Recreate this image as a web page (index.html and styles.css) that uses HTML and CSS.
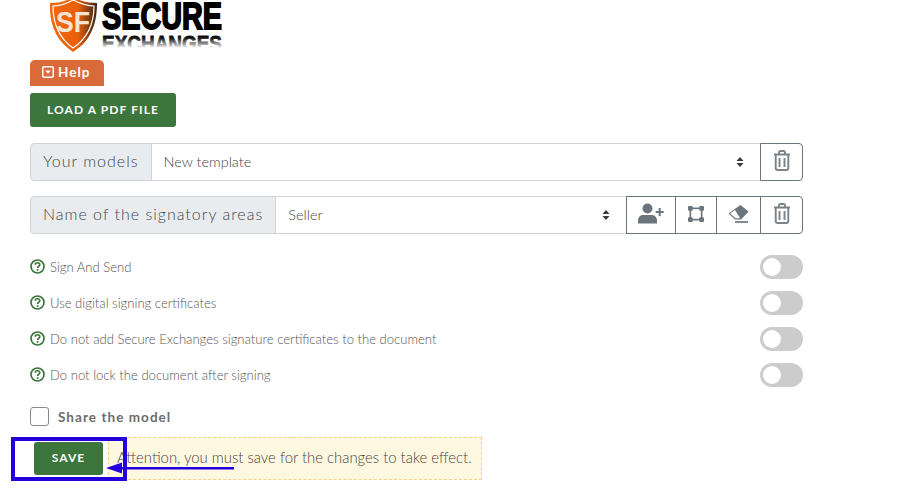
FILE: index.html
```html
<!DOCTYPE html>
<html lang="en">
<head>
<meta charset="utf-8">
<title>Signature template</title>
<link rel="stylesheet" href="styles.css">
</head>
<body>
<main class="page">
  <svg class="logo" viewBox="0 0 172 52" width="172" height="52" aria-label="Secure Exchanges">
    <defs>
      <linearGradient id="sh" x1="0" x2="1" y1="0" y2="0">
        <stop offset="0" stop-color="#f26a10"/><stop offset=".6" stop-color="#e85f08"/><stop offset="1" stop-color="#3a2318"/>
      </linearGradient>
      <linearGradient id="fade" x1="0" x2="0" y1="0" y2="1">
        <stop offset="0" stop-color="#fff" stop-opacity="0"/><stop offset=".55" stop-color="#fff" stop-opacity=".75"/><stop offset=".7" stop-color="#fff"/><stop offset="1" stop-color="#fff"/>
      </linearGradient>
    </defs>
    <path d="M23 -3 C32 2 40 3 47 3 C47 24 41 41 23 52 C6 41 -1 24 0 3 C7 3 15 2 23 -3Z" fill="url(#sh)"/>
    <path d="M23 0 C31 4 38 6 44 6 C44 24 38 38 23 48 C9 38 3 24 3 6 C9 6 16 4 23 0Z" fill="none" stroke="#fff" stroke-width="1.2"/>
    <text class="logo-sf" x="6" y="32" textLength="34" lengthAdjust="spacingAndGlyphs">SF</text>
    <text class="logo-a" x="52" y="29" textLength="120" lengthAdjust="spacingAndGlyphs">SECURE</text>
    <text class="logo-b" x="52" y="51" textLength="120" lengthAdjust="spacingAndGlyphs">EXCHANGES</text>
    <rect x="50" y="38" width="124" height="14" fill="url(#fade)"/>
  </svg>

  <button class="help" type="button">
    <svg width="12" height="12" viewBox="0 0 12 12"><rect x=".75" y=".75" width="10.5" height="10.5" rx="1.5" fill="none" stroke="#fff" stroke-width="1.5"/><path d="M3.2 4.4h5.6L6 7.8z" fill="#fff"/></svg>
    <span class="help-label">Help</span>
  </button>

  <button class="btn btn-load" type="button"><span class="btn-label">LOAD A PDF FILE</span></button>

  <div class="group group-first">
    <span class="addon">Your models</span>
    <div class="select"><span>New template</span><svg class="updown" width="8" height="12" viewBox="0 0 8 12"><path d="M4 1l3.5 4h-7zM4 11L.5 7h7z" fill="#343a40"/></svg></div>
    <button class="icon-btn" type="button" aria-label="Delete"><svg width="18" height="21" viewBox="0 0 18 21"><use href="#trash"/></svg></button>
  </div>

  <div class="group">
    <span class="addon">Name of the signatory areas</span>
    <div class="select"><span>Seller</span><svg class="updown" width="8" height="12" viewBox="0 0 8 12"><path d="M4 1l3.5 4h-7zM4 11L.5 7h7z" fill="#343a40"/></svg></div>
    <button class="icon-btn icon-user" type="button" aria-label="Add signer"><svg width="26" height="21" viewBox="0 0 26 21" fill="#6c757d"><circle cx="9.5" cy="5.5" r="5"/><path d="M0 20.500v-3c0-3.500 2.500-5.500 5.500-5.500h8c3.500 0 5.500 2.500 5.500 5.500v3z"/><path d="M20.700 5h2v3h3v2h-3v3h-2v-3h-3V8h3z"/></svg></button>
    <button class="icon-btn icon-area" type="button" aria-label="Area"><svg width="16" height="16" viewBox="0 0 17 17"><rect x="2.500" y="2.500" width="12" height="12" fill="none" stroke="#6c757d" stroke-width="1.800"/><g fill="#6c757d"><rect width="5" height="5" rx="1"/><rect x="12" width="5" height="5" rx="1"/><rect y="12" width="5" height="5" rx="1"/><rect x="12" y="12" width="5" height="5" rx="1"/></g></svg></button>
    <button class="icon-btn icon-erase" type="button" aria-label="Erase"><svg width="21" height="18" viewBox="0 0 21 18"><path d="M12.500 0L20.500 6.500 13 14.500H7L.5 8.500z" fill="#6c757d"/><path d="M7 5L2.200 8.600 7.500 13.200h4.700z" fill="#fff"/><path d="M7 17h13" stroke="#6c757d" stroke-width="1.700"/></svg></button>
    <button class="icon-btn" type="button" aria-label="Delete"><svg width="18" height="21" viewBox="0 0 18 21"><use href="#trash"/></svg></button>
  </div>

  <svg class="defs" width="0" height="0"><symbol id="trash" viewBox="0 0 18 21"><path d="M1 4.500h16M6 4V2.500C6 1.600 6.600 1 7.500 1h3c.9 0 1.500.6 1.500 1.500V4M2.700 5v13c0 1.200.8 2 2 2h8.600c1.200 0 2-.8 2-2V5M6.500 8v9M11.500 8v9" fill="none" stroke="#7b8288" stroke-width="1.900"/></symbol></svg>

  <ul class="options">
    <li class="option"><svg class="q" width="15" height="15" viewBox="0 0 15 15"><use href="#qm"/></svg><span>Sign And Send</span><i class="toggle"></i></li>
    <li class="option"><svg class="q" width="15" height="15" viewBox="0 0 15 15"><use href="#qm"/></svg><span>Use digital signing certificates</span><i class="toggle"></i></li>
    <li class="option"><svg class="q" width="15" height="15" viewBox="0 0 15 15"><use href="#qm"/></svg><span>Do not add Secure Exchanges signature certificates to the document</span><i class="toggle"></i></li>
    <li class="option"><svg class="q" width="15" height="15" viewBox="0 0 15 15"><use href="#qm"/></svg><span>Do not lock the document after signing</span><i class="toggle"></i></li>
  </ul>
  <svg class="defs" width="0" height="0"><symbol id="qm" viewBox="0 0 15 15"><circle cx="7.500" cy="7.500" r="6.500" fill="none" stroke="#3c763d" stroke-width="1.700"/><path d="M5.200 5.800c0-1.300 1-2 2.300-2s2.300.8 2.300 1.900c0 1.600-2.200 1.500-2.200 3.200" fill="none" stroke="#3c763d" stroke-width="1.600"/><circle cx="7.600" cy="11" r="1" fill="#3c763d"/></symbol></svg>

  <label class="share"><i class="check"></i>Share the model</label>

  <div class="save-row">
    <button class="btn btn-save" type="button"><span class="btn-label">SAVE</span></button>
    <div class="notice">Attention, you must save for the changes to take effect.</div>
    <i class="mark-box"></i>
    <svg class="mark-arrow" width="130" height="14" viewBox="0 0 130 14"><path d="M128 6v2.500H16V6z" fill="#2200dd"/><path d="M0 7L16 1.500v11z" fill="#2200dd"/></svg>
  </div>
</main>
</body>
</html>
```
FILE: styles.css
```css
* { box-sizing: border-box; }
html, body { margin: 0; background: #fff; }
body { font-family: Lato, "Open Sans", sans-serif; color: #6c6c6c; overflow: hidden; }
button { font-family: inherit; cursor: pointer; }
.page { width: 803px; height: 493px; margin-left: 30px; display: flex; flex-direction: column; align-items: flex-start; }

.logo { display: block; margin-left: 20px; height: 52px; overflow: hidden; flex: none; }
.logo-sf { font: 900 30px "Liberation Sans", sans-serif; fill: #f7e3d4; }
.logo-a { font: 700 37px "Liberation Sans", sans-serif; fill: #000; stroke: #000; stroke-width: 1.800px; }
.logo-b { font: 700 22px "Liberation Sans", sans-serif; fill: #111; stroke: #111; stroke-width: .8px; }

.help { margin-top: 8px; width: 74px; height: 26px; padding: 0 0 2px 12px; display: flex; align-items: center; gap: 4px; border: 0; border-radius: 5px 5px 0 0; background: #d96b3b; color: #fff; font-weight: 700; font-size: 13.500px; letter-spacing: 1px; }

.btn { border: 0; border-radius: 3px; background: #3c763d; color: #fff; font-weight: 700; font-size: 12px; letter-spacing: 1.100px; padding: 0 0 2px; }
.btn-load { margin-top: 7px; width: 146px; height: 34px; }

.group { display: flex; width: 773px; height: 38px; margin-top: 15px; flex: none; }
.group-first { margin-top: 16px; }
.addon { display: flex; align-items: center; padding: 0 12px 3px 12px; background: #e9ecef; border: 1px solid #ced4da; border-radius: 4px 0 0 4px; font-size: 16px; font-weight: 300; letter-spacing: 1px; color: #3f464d; white-space: nowrap; }
.select { flex: 1; display: flex; align-items: center; justify-content: space-between; padding: 0 16px 0 12px; margin-left: -1px; border: 1px solid #ced4da; font-size: 14.500px; font-weight: 300; color: #3f464d; }
.select span { padding-bottom: 2px; }
.icon-btn { width: 43px; display: flex; align-items: center; justify-content: center; margin-left: -1px; padding: 0 0 3px; background: #fff; border: 1px solid #6c757d; }
.icon-user { width: 50px; }
.icon-area { width: 42px; }
.icon-erase { width: 45px; }
.icon-btn:last-child { border-radius: 0 4px 4px 0; }
.defs { position: absolute; }

.options { list-style: none; width: 773px; margin: 15px 0 0; padding: 0; flex: none; }
.option { display: flex; align-items: center; height: 36px; font-size: 13.100px; font-weight: 300; color: #555; }
.q { flex: none; margin-right: 5px; margin-top: -2px; }
.option span { flex: 1; }
.toggle { width: 43px; height: 24px; border-radius: 12px; background: #cccccc; position: relative; }
.toggle::before { content: ""; position: absolute; left: 3px; top: 3px; width: 18px; height: 18px; border-radius: 50%; background: #fff; }

.share { display: flex; align-items: center; gap: 9px; margin-top: 14px; font-weight: 700; font-size: 13.500px; letter-spacing: 1.050px; color: #6c6c6c; }
.check { width: 19px; height: 19px; border: 1px solid #8a8a8a; border-radius: 3px; background: #fff; }

.save-row { position: relative; display: flex; align-items: center; gap: 5px; margin-top: 11px; padding-left: 4px; }
.btn-save { width: 69px; height: 33px; font-size: 12px; }
.notice { height: 43px; width: 374px; display: flex; align-items: center; padding: 0 0 3px 8px; background: #fff8e1; border: 1px dashed #f5d48a; font-size: 14.880px; font-weight: 300; color: #444; white-space: nowrap; }
.mark-box { position: absolute; left: -19px; top: 0; width: 116px; height: 44px; border: 4px solid #2200dd; }
.mark-arrow { position: absolute; left: 76px; top: 24px; }
```
